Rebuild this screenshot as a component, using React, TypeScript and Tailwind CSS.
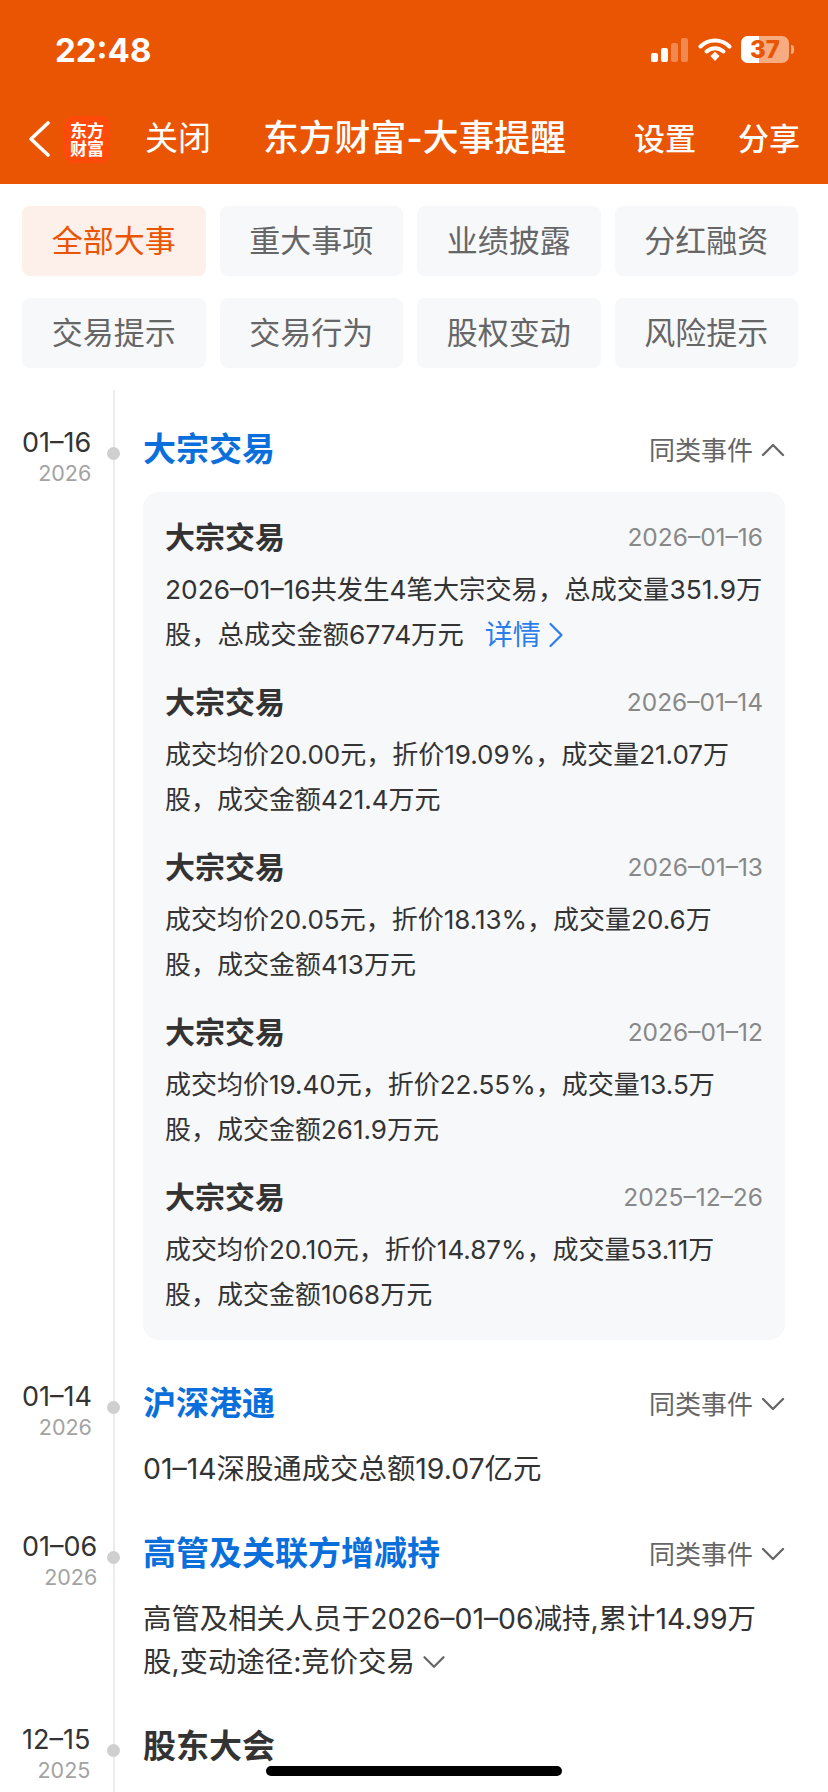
import React from 'react'
import { ChevronRight, ChevronDown, ChevronUp } from 'lucide-react'

const tabs = ['全部大事', '重大事项', '业绩披露', '分红融资', '交易提示', '交易行为', '股权变动', '风险提示']

const details = [
  { date: '2026–01–14', line1: '成交均价20.00元，折价19.09%，成交量21.07万', line2: '股，成交金额421.4万元' },
  { date: '2026–01–13', line1: '成交均价20.05元，折价18.13%，成交量20.6万', line2: '股，成交金额413万元' },
  { date: '2026–01–12', line1: '成交均价19.40元，折价22.55%，成交量13.5万', line2: '股，成交金额261.9万元' },
  { date: '2025–12–26', line1: '成交均价20.10元，折价14.87%，成交量53.11万', line2: '股，成交金额1068万元' },
]

const DateCol = ({ day, year }: { day: string; year: string }) => (
  <div className="w-[107px] shrink-0 pl-[22px]">
    <div className="w-fit flex flex-col items-end">
      <div className="text-[27px] leading-[32px] text-[#333333] whitespace-nowrap">{day}</div>
      <div className="text-[21.5px] leading-[28px] text-[#a3a3a3]">{year}</div>
    </div>
  </div>
)

const Dot = () => <div className="w-[13px] h-[13px] rounded-full bg-[#cfcfcf] shrink-0 mr-[23px] mt-[20px]" />

const Same = ({ open }: { open?: boolean }) => (
  <div className="flex items-center text-[26px] text-[#666666]">
    同类事件
    {open ? (
      <ChevronUp className="-mr-[8px] w-[40px] h-[40px] text-[#666666]" strokeWidth={1.4} />
    ) : (
      <ChevronDown className="-mr-[8px] w-[40px] h-[40px] text-[#666666]" strokeWidth={1.4} />
    )}
  </div>
)

const CardItem = ({ date, line1, line2, first, children }: { date: string; line1: string; line2: string; first?: boolean; children?: React.ReactNode }) => (
  <div className="mb-[15px]">
    <div className="flex justify-between items-center h-[61px]">
      <span className="text-[30px] font-semibold text-[#333333]">大宗交易</span>
      <span className="text-[24.5px] text-[#888888]">{date}</span>
    </div>
    <div className={first ? 'text-[26.3px] leading-[44.5px] text-[#333333] whitespace-nowrap' : 'text-[26px] leading-[44.5px] text-[#333333] whitespace-nowrap'}>{line1}</div>
    <div className={first ? 'text-[26.3px] leading-[44.5px] text-[#333333] whitespace-nowrap flex items-center' : 'text-[26px] leading-[44.5px] text-[#333333] whitespace-nowrap flex items-center'}>
      {line2}
      {children}
    </div>
  </div>
)

const App = () => {
  return (
    <div className="relative w-[828px] h-[1792px] overflow-hidden bg-white font-['Inter','Noto_Sans_CJK_SC',sans-serif]">
      {/* orange top */}
      <div className="h-[184px] bg-[#ea5504] text-white">
        <div className="h-[100px] flex items-start justify-between pl-[55px] pr-[34px] pt-[28px]">
          <div className="text-[33px] leading-[44px] font-bold">22:48</div>
          <div className="flex items-center gap-[9px] pt-[8px]">
            <svg width="38" height="24" viewBox="0 0 38 24">
              <rect x="0" y="15" width="7" height="9" rx="2" fill="#fff" />
              <rect x="10" y="10" width="7" height="14" rx="2" fill="#fff" />
              <rect x="20" y="5" width="7" height="19" rx="2" fill="#fff" opacity="0.3" />
              <rect x="30" y="0" width="7" height="24" rx="2" fill="#fff" opacity="0.3" />
            </svg>
            <svg width="34" height="26" viewBox="0 0 34 26" fill="none">
              <path d="M2.5 9.5 C10.5 1.5 23.5 1.5 31.5 9.5" stroke="#fff" strokeWidth="4" strokeLinecap="round" />
              <path d="M8.5 14.5 C13.5 10 20.5 10 25.5 14.5" stroke="#fff" strokeWidth="4" strokeLinecap="round" />
              <path d="M12.5 19 L17 14.8 L21.5 19 L17 24 Z" fill="#fff" />
            </svg>
            <div className="flex items-center">
              <div className="relative w-[48px] h-[27px] rounded-[7px] bg-[#f6ac80] overflow-hidden">
                <div className="w-[18px] h-full bg-white" />
                <div className="absolute inset-0 flex items-center justify-center text-[24px] leading-none font-extrabold text-[#ea5504]">37</div>
              </div>
              <div className="w-[3px] h-[9px] rounded-r-full bg-[#f6ac80] ml-[2px]" />
            </div>
          </div>
        </div>
        <div className="flex items-center h-[84px] pb-[6px] pl-[27px] pr-[28px]">
          <svg width="24" height="38" viewBox="0 0 24 38" fill="none" className="shrink-0">
            <path d="M21 3 L4 19 L21 35" stroke="#fff" strokeWidth="3.6" strokeLinecap="round" strokeLinejoin="round" />
          </svg>
          <div className="w-[46px] h-[47px] ml-[13px] rounded-[9px] bg-[#ff4a0a] shrink-0 flex items-center justify-center text-center text-[17px] leading-[18px] font-bold font-['Noto_Sans_CJK_SC',sans-serif]">
            东方
            <br />
            财富
          </div>
          <div className="ml-[35px] text-[33px] whitespace-nowrap">关闭</div>
          <div className="ml-[52px] text-[35.8px] font-medium whitespace-nowrap">东方财富-大事提醒</div>
          <div className="ml-auto text-[31px] font-medium whitespace-nowrap">设置</div>
          <div className="ml-[42px] text-[31px] font-medium whitespace-nowrap">分享</div>
        </div>
      </div>

      {/* tabs */}
      <div className="grid grid-cols-4 gap-x-[14px] gap-y-[22px] pl-[22px] pr-[30px] pt-[22px]">
        {tabs.map((t, i) => (
          <div
            key={t}
            className={
              i === 0
                ? 'h-[70px] rounded-[8px] bg-[#fdf0ea] text-[#ea5504] flex items-center justify-center text-[31px]'
                : 'h-[70px] rounded-[8px] bg-[#f7f8fa] text-[#666666] flex items-center justify-center text-[31px]'
            }
          >
            {t}
          </div>
        ))}
      </div>

      {/* timeline */}
      <div className="relative h-[1402px] mt-[22px] pt-[37px] pr-[43px]">
        <div className="absolute left-[113px] top-0 bottom-0 w-[2px] bg-[#ececec]" />

        <div className="flex relative">
          <DateCol day="01–16" year="2026" />
          <Dot />
          <div className="flex-1">
            <div className="flex items-center justify-between h-[40px] mt-[3px]">
              <span className="text-[33px] font-semibold text-[#0b6fdb]">大宗交易</span>
              <Same open />
            </div>
            <div className="mt-[22px] rounded-[16px] bg-[#f7f8fa] px-[22px] pt-[15px] pb-[8px]">
              <CardItem first date="2026–01–16" line1="2026–01–16共发生4笔大宗交易，总成交量351.9万" line2="股，总成交金额6774万元">
                <span className="ml-[21px] text-[28px] text-[#2b7de9]">详情</span>
                <ChevronRight className="-ml-[7px] w-[44px] h-[44px] text-[#2b7de9]" strokeWidth={1.2} />
              </CardItem>
              {details.map((d) => (
                <CardItem key={d.date} date={d.date} line1={d.line1} line2={d.line2} />
              ))}
            </div>
          </div>
        </div>

        <div className="flex relative mt-[41px]">
          <DateCol day="01–14" year="2026" />
          <Dot />
          <div className="flex-1">
            <div className="flex items-center justify-between h-[40px] mt-[3px]">
              <span className="text-[33px] font-semibold text-[#0b6fdb]">沪深港通</span>
              <Same />
            </div>
            <div className="mt-[23px] text-[28.4px] leading-[44px] text-[#333333] whitespace-nowrap">01–14深股通成交总额19.07亿元</div>
          </div>
        </div>

        <div className="flex relative mt-[40px]">
          <DateCol day="01–06" year="2026" />
          <Dot />
          <div className="flex-1">
            <div className="flex items-center justify-between h-[40px] mt-[3px]">
              <span className="text-[33px] font-semibold text-[#0b6fdb]">高管及关联方增减持</span>
              <Same />
            </div>
            <div className="mt-[23px] text-[28.4px] leading-[43px] text-[#333333] whitespace-nowrap">高管及相关人员于2026–01–06减持,累计14.99万</div>
            <div className="text-[28.4px] leading-[43px] text-[#333333] flex items-center whitespace-nowrap">
              股,变动途径:竞价交易
              <ChevronDown className="ml-0 w-[38px] h-[38px] text-[#666666]" strokeWidth={1.4} />
            </div>
          </div>
        </div>

        <div className="flex relative mt-[41px]">
          <DateCol day="12–15" year="2025" />
          <Dot />
          <div className="flex-1">
            <div className="flex items-center h-[40px] mt-[3px]">
              <span className="text-[33px] font-semibold text-[#333333]">股东大会</span>
            </div>
          </div>
        </div>
      </div>

      <div className="absolute left-[266px] bottom-[16px] w-[296px] h-[10px] rounded-full bg-black" />
    </div>
  )
}

export default App
